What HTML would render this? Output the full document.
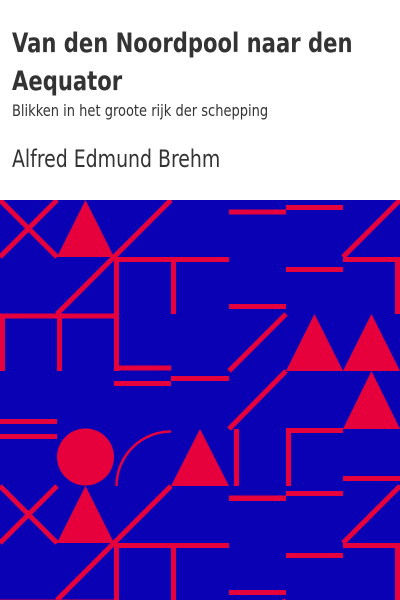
<!DOCTYPE html>
<html><head><meta charset="utf-8"><style>
html,body{margin:0;padding:0;width:400px;height:600px;overflow:hidden;background:#fff;position:relative}
.t{position:absolute;left:12px;color:#333;font-family:"DejaVu Sans Condensed","DejaVu Sans","Liberation Sans",sans-serif;white-space:nowrap;transform-origin:0 0}
#title{top:25px;font-size:27px;line-height:38px;font-weight:bold;transform:scaleX(0.87)}
#sub{top:101px;font-size:16px;line-height:20px;transform:scaleX(0.905)}
#auth{top:145px;font-size:24px;line-height:28px;transform:scaleX(0.875)}
svg{position:absolute;left:0;top:0;overflow:hidden}
</style></head><body>
<div class="t" id="title">Van den Noordpool naar den<br>Aequator</div>
<div class="t" id="sub">Blikken in het groote rijk der schepping</div>
<div class="t" id="auth">Alfred Edmund Brehm</div>
<svg width="400" height="600" viewBox="0 0 400 600">
<defs>
<clipPath id="c"><rect x="0" y="200" width="400" height="400"/></clipPath>
<g id="g" stroke="#E6003C" stroke-width="5" fill="none">
<line x1="0" y1="200" x2="57" y2="257"/><line x1="57" y1="200" x2="0" y2="257"/>
<polygon points="85.5,200 57,257 114,257" fill="#E6003C" stroke="none"/>
<line x1="171" y1="200" x2="57" y2="314"/>
<line x1="114" y1="259.5" x2="229" y2="259.5"/>
<line x1="116.5" y1="257" x2="116.5" y2="371"/>
<line x1="114" y1="368" x2="171" y2="368"/>
<line x1="173.5" y1="257" x2="173.5" y2="314"/>
<line x1="0" y1="316" x2="114" y2="316"/>
<line x1="2.5" y1="314" x2="2.5" y2="371"/><line x1="59.5" y1="314" x2="59.5" y2="371"/>
<line x1="229" y1="212" x2="286" y2="212"/><line x1="286" y1="207.5" x2="343" y2="207.5"/>
<line x1="400" y1="200" x2="343" y2="257"/>
<line x1="343" y1="259.5" x2="400" y2="259.5"/>
<line x1="397.5" y1="257" x2="397.5" y2="314"/>
<line x1="286" y1="269.5" x2="343" y2="269.5"/>
<line x1="229" y1="306.5" x2="286" y2="306.5"/>
<line x1="286" y1="314" x2="229" y2="371"/>
<polygon points="314.5,314 286,371 343,371" fill="#E6003C" stroke="none"/>
<polygon points="371.5,314 343,371 400,371" fill="#E6003C" stroke="none"/>
<line x1="171" y1="378.5" x2="229" y2="378.5"/>
<line x1="114" y1="383.5" x2="171" y2="383.5"/>
<line x1="286" y1="371" x2="229" y2="429"/>
<polygon points="371.5,371 343,429 400,429" fill="#E6003C" stroke="none"/>
<line x1="0" y1="421.5" x2="57" y2="421.5"/><line x1="0" y1="436.5" x2="57" y2="436.5"/>
<circle cx="85.5" cy="457" r="28.5" fill="#E6003C" stroke="none"/>
<path d="M116.5,486 A54.5,54.5 0 0 1 171,431.5" stroke-width="2.5"/>
<polygon points="200,429 171,486 229,486" fill="#E6003C" stroke="none"/>
<line x1="236.5" y1="429" x2="236.5" y2="486"/>
<line x1="286" y1="430.5" x2="343" y2="430.5"/>
<line x1="288.5" y1="429" x2="288.5" y2="486"/>
<line x1="343" y1="478.5" x2="400" y2="478.5"/>
<line x1="286" y1="493.5" x2="343" y2="493.5"/>
<line x1="229" y1="498.5" x2="286" y2="498.5"/>
</g>
</defs>
<g clip-path="url(#c)">
<rect x="0" y="200" width="400" height="400" fill="#0A00B4"/>
<use href="#g"/>
<use href="#g" transform="translate(0,286)"/>
</g>
</svg>
</body></html>
